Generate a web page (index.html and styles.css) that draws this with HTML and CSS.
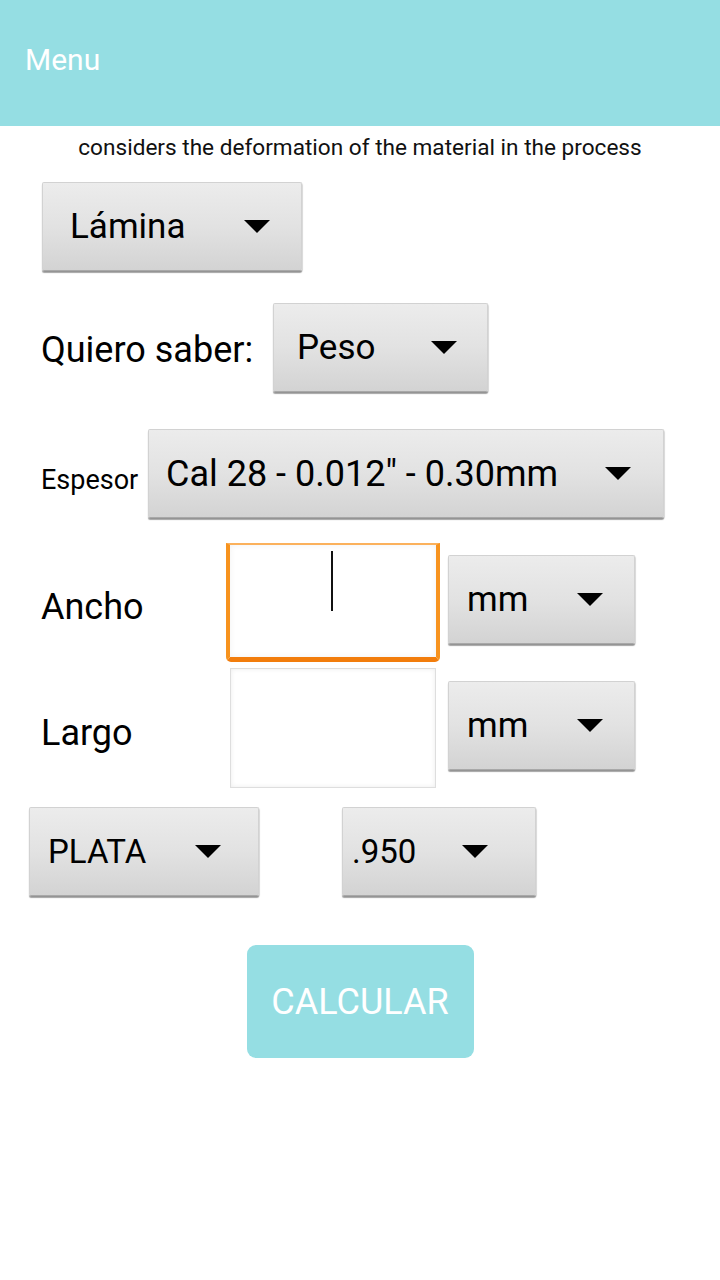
FILE: index.html
```html
<!DOCTYPE html>
<html lang="es">
<head>
<meta charset="utf-8">
<title>Menu</title>
<link rel="stylesheet" href="styles.css">
</head>
<body>
<header class="appbar"><span class="appbar-title">Menu</span></header>
<p class="subtitle">considers the deformation of the material in the process</p>

<div class="row row-type">
  <div class="spinner sp-type"><span class="val">Lámina</span><svg class="caret" viewBox="0 0 26 13"><polygon points="0,0 26,0 13,13"/></svg></div>
</div>

<div class="row row-ask">
  <span class="label label-ask">Quiero saber:</span>
  <div class="spinner sp-ask"><span class="val">Peso</span><svg class="caret" viewBox="0 0 26 13"><polygon points="0,0 26,0 13,13"/></svg></div>
</div>

<div class="row row-thick">
  <span class="label label-thick">Espesor</span>
  <div class="spinner sp-thick"><span class="val">Cal 28 - 0.012" - 0.30mm</span><svg class="caret" viewBox="0 0 26 13"><polygon points="0,0 26,0 13,13"/></svg></div>
</div>

<div class="row row-width">
  <span class="label label-width">Ancho</span>
  <div class="input input-focus"><span class="cursor"></span></div>
  <div class="spinner sp-unit sp-unit-1"><span class="val">mm</span><svg class="caret" viewBox="0 0 26 13"><polygon points="0,0 26,0 13,13"/></svg></div>
</div>

<div class="row row-length">
  <span class="label label-length">Largo</span>
  <div class="input input-plain"></div>
  <div class="spinner sp-unit sp-unit-2"><span class="val">mm</span><svg class="caret" viewBox="0 0 26 13"><polygon points="0,0 26,0 13,13"/></svg></div>
</div>

<div class="row row-metal">
  <div class="spinner sp-metal"><span class="val">PLATA</span><svg class="caret" viewBox="0 0 26 13"><polygon points="0,0 26,0 13,13"/></svg></div>
  <div class="spinner sp-purity"><span class="val">.950</span><svg class="caret" viewBox="0 0 26 13"><polygon points="0,0 26,0 13,13"/></svg></div>
</div>

<div class="row row-action">
  <button class="btn-calc" type="button">CALCULAR</button>
</div>
</body>
</html>
```
FILE: styles.css
```css
* { box-sizing: border-box; }
html, body { margin: 0; padding: 0; background: #fff; }
body { font-family: Roboto, "Liberation Sans", sans-serif; color: #000; width: 720px; }

.appbar {
  height: 126px;
  background: #95dee3;
  display: flex;
  align-items: center;
  padding: 0 0 8px 25px;
}
.appbar-title { color: #fff; font-size: 30px; }

.subtitle {
  margin: 0;
  text-align: center;
  font-size: 22.6px;
  line-height: 44px;
  color: #111;
}

.row { display: flex; }

.label { font-size: 36px; color: #000; flex: none; }

.spinner {
  flex: none;
  height: 89px;
  display: flex;
  align-items: center;
  justify-content: space-between;
  background: linear-gradient(to bottom, #ececec 0%, #e2e2e2 50%, #d3d3d3 100%);
  border: 1px solid #d2d2d2;
  border-bottom-color: #a8a8a8;
  box-shadow: 0 2px 1px rgba(0,0,0,0.35), 1px 1px 1px rgba(0,0,0,0.12);
  border-radius: 2px;
  font-size: 35px;
}
.spinner .val { white-space: nowrap; }
.caret { width: 26px; height: 13px; flex: none; fill: #000; }

.row-type { margin-top: 12px; padding-left: 42px; }
.sp-type { width: 260px; padding: 0 31px 0 27px; }

.row-ask { margin-top: 32px; padding-left: 41px; align-items: center; }
.label-ask { width: 232px; padding-top: 4px; }
.sp-ask { width: 215px; padding: 0 30px 0 23px; }

.row-thick { margin-top: 37px; padding-left: 41px; align-items: center; }
.label-thick { width: 107px; font-size: 27px; padding-top: 12px; }
.sp-thick { width: 516px; padding: 0 32px 0 17px; font-size: 36px; }

.row-width { margin-top: 25px; padding-left: 41px; align-items: flex-start; }
.label-width { width: 185px; align-self: center; padding-top: 8px; }
.input { flex: none; background: #fff; }
.input-focus {
  width: 214px;
  height: 119px;
  border: 4px solid #f7931e;
  border-top: 2px solid #fbb15c;
  border-bottom: 5px solid #f27d0c;
  border-radius: 0 0 5px 5px;
  box-shadow: inset 0 0 6px rgba(0,0,0,0.06);
  display: flex;
  justify-content: center;
  padding-top: 6px;
}
.cursor { width: 2px; height: 60px; background: #111; margin-left: -2px; }
.sp-unit { width: 187px; padding: 0 31px 0 18px; }
.sp-unit-1 { margin-left: 8px; margin-top: 12px; }

.row-length { margin-top: 6px; padding-left: 41px; align-items: flex-start; }
.label-length { width: 189px; align-self: center; padding-top: 10px; }
.input-plain {
  width: 206px;
  height: 120px;
  border: 1px solid #dedede;
  box-shadow: inset 0 0 5px rgba(0,0,0,0.08);
}
.sp-unit-2 { margin-left: 12px; margin-top: 13px; }

.row-metal { margin-top: 19px; padding-left: 29px; gap: 83px; }
.sp-metal { width: 230px; padding: 0 37px 0 18px; font-size: 33px; }
.sp-purity { width: 194px; padding: 0 47px 0 9px; font-size: 33px; }

.row-action { margin-top: 49px; justify-content: center; }
.btn-calc {
  width: 227px;
  height: 113px;
  border: none;
  border-radius: 9px;
  background: #95dee3;
  color: #fff;
  font-family: Roboto, "Liberation Sans", sans-serif;
  font-size: 36px;
  padding: 0;
}
```
